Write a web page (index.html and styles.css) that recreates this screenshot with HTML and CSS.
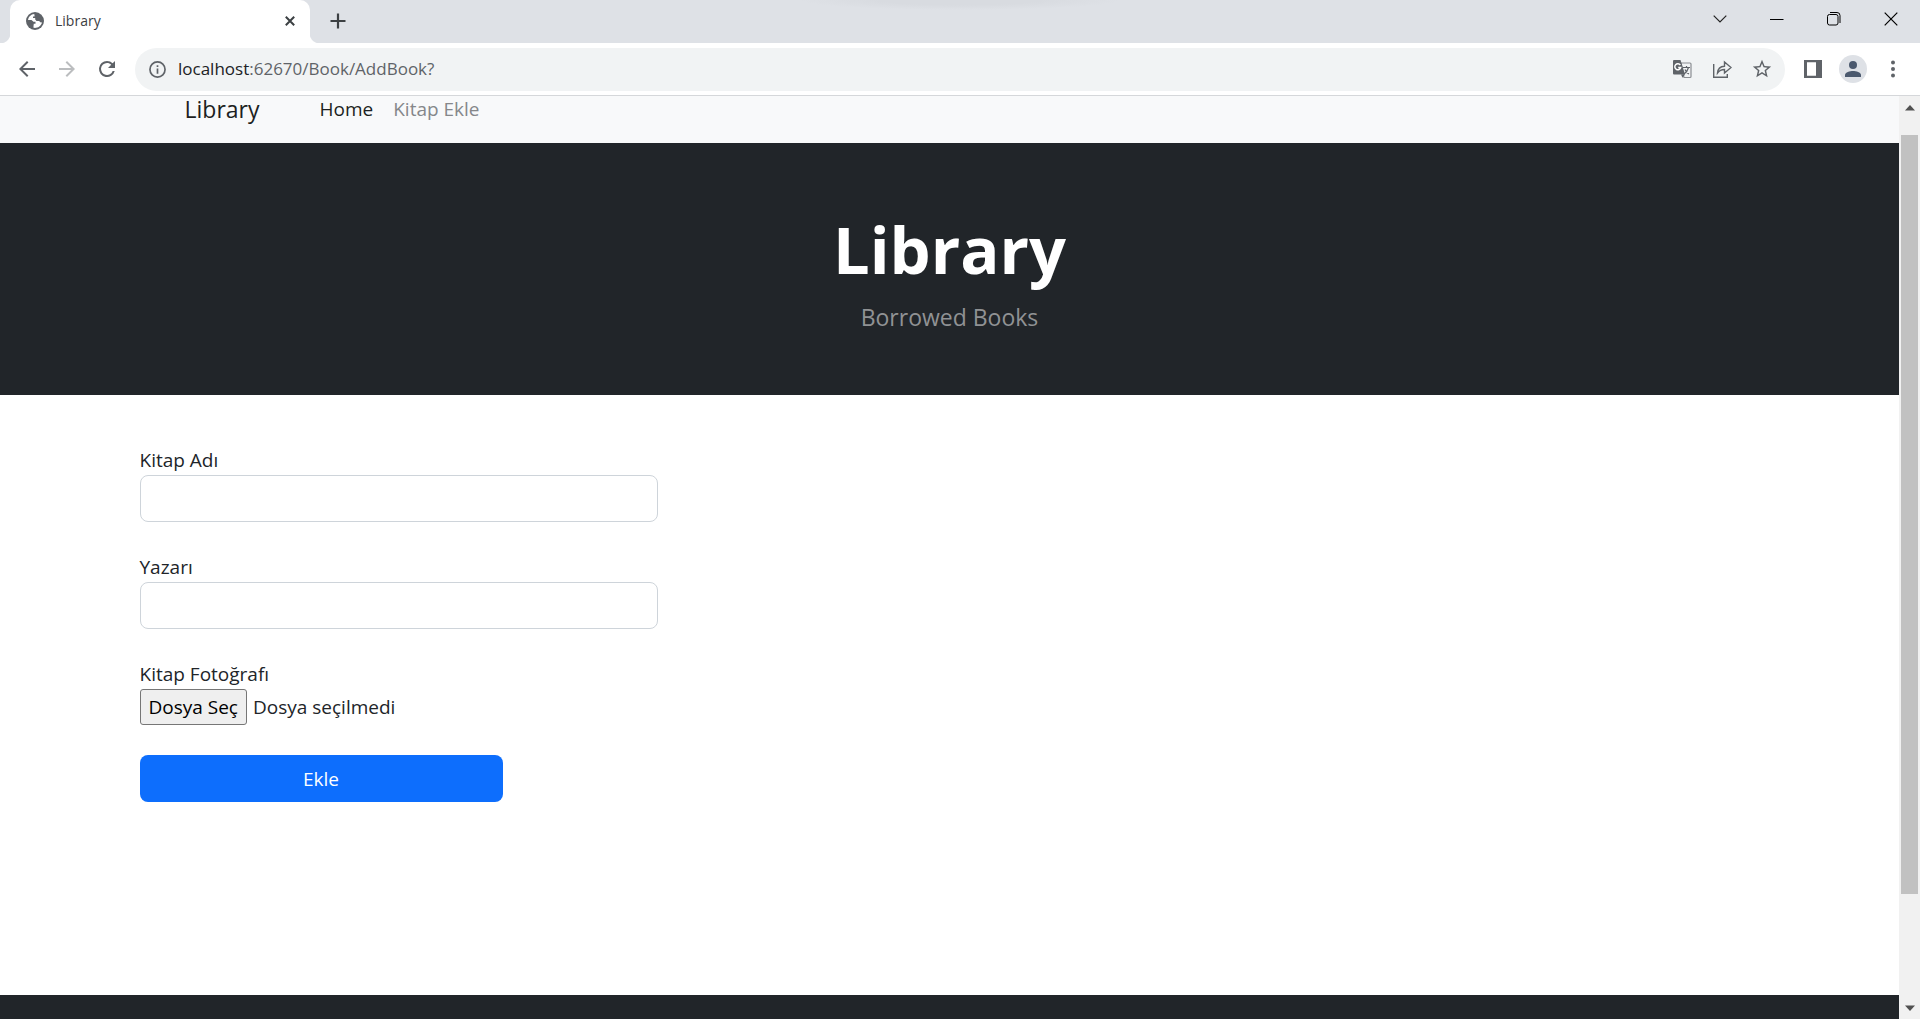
FILE: index.html
```html
<!DOCTYPE html>
<html lang="tr">
<head>
<meta charset="utf-8">
<title>Library</title>
<meta name="viewport" content="width=device-width, initial-scale=1">
<link rel="stylesheet" href="styles.css">
</head>
<body>
<header class="browser">
  <div class="tabstrip">
    <div class="tab">
      <svg class="icon-globe" viewBox="0 0 18 18" aria-hidden="true"><circle cx="9" cy="9" r="9" fill="#5f6368"/><path fill="#fff" d="M8.200 1.900C5 2.200 2.400 4.700 2 8h3.500l2 1.800H9.500v2H7.800L7.500 14v1.800C11 16.500 15 14.500 16 10.500l-1.800-.2-1-1.300H10.500L9.200 7.500V6H7V4.500h1.500V3z"/></svg>
      <span class="tab-title">Library</span>
      <button class="tab-close" type="button" aria-label="Sekmeyi kapat"><svg width="10" height="10" viewBox="0 0 10 10"><path d="M.8.8l8.400 8.400M9.200.8L.8 9.200" stroke="#3c4043" stroke-width="2"/></svg></button>
    </div>
    <button class="new-tab" type="button" aria-label="Yeni sekme"><svg width="16" height="16" viewBox="0 0 16 16"><path d="M8 .5v15M.5 8h15" stroke="#3c4043" stroke-width="2.200"/></svg></button>
    <div class="window-controls">
      <button type="button" aria-label="Sekme ara"><svg width="14" height="8" viewBox="0 0 14 8"><path d="M.7.700L7 7l6.300-6.300" fill="none" stroke="#222" stroke-width="1.200"/></svg></button>
      <button type="button" aria-label="Simge durumuna küçült"><svg width="14" height="14" viewBox="0 0 14 14"><path d="M0 7.500h13.500" stroke="#000"/></svg></button>
      <button type="button" aria-label="Önceki boyut"><svg width="14" height="14" viewBox="0 0 14 14" fill="none" stroke="#000"><rect x=".5" y="2.500" width="10.500" height="10.500" rx="2"/><path d="M3 .500h7q3 0 3 3v7.500"/></svg></button>
      <button type="button" aria-label="Kapat"><svg width="14" height="14" viewBox="0 0 14 14"><path d="M.7.700l12.600 12.600M13.300.700L.7 13.300" stroke="#000" stroke-width="1.200"/></svg></button>
    </div>
  </div>
  <div class="toolbar">
    <button class="nav-button" type="button" aria-label="Geri"><svg viewBox="0 0 24 24"><path fill="#5f6368" d="M20 11H7.830l5.590-5.590L12 4l-8 8 8 8 1.410-1.410L7.830 13H20z"/></svg></button>
    <button class="nav-button" type="button" aria-label="İleri" disabled><svg viewBox="0 0 24 24"><path fill="#bbbdbf" d="M12 4l-1.410 1.410L16.170 11H4v2h12.170l-5.580 5.590L12 20l8-8z"/></svg></button>
    <button class="nav-button" type="button" aria-label="Yenile"><svg viewBox="0 0 24 24"><path fill="#5f6368" d="M17.650 6.350A7.960 7.960 0 0 0 12 4a8 8 0 1 0 7.730 10h-2.080A6 6 0 1 1 12 6c1.660 0 3.140.690 4.220 1.780L13 11h7V4z"/></svg></button>
    <form class="omnibox">
      <svg class="icon-info" viewBox="0 0 16 16" fill="none" stroke="#5f6368" stroke-width="1.600" aria-hidden="true"><circle cx="8" cy="8" r="7.100"/><path d="M8 7v5M8 4v1.600"/></svg>
      <a class="address" href="#">localhost<span class="path">:62670/Book/AddBook?</span></a>
      <button type="button" aria-label="Çevir"><svg width="20" height="20" viewBox="0 0 20 20"><path fill="none" stroke="#8b8e92" stroke-width="1.200" d="M9 4h9q1 0 1 1v12.500q0 1-1 1h-6z"/><path d="M11 8.500h7M14.500 7v1.500M16.500 8.500q-1 4-4.500 6.500M13 10.500q1 3 4 4.500" fill="none" stroke="#5f6368" stroke-width="1.200"/><path fill="#5f6368" d="M2 1h6.500l4.500 14.500H2q-1 0-1-1V2q0-1 1-1z"/><path fill="#5f6368" d="M9 15.500h4l-2.500 3.200z"/><path d="M8.300 6A3 3 0 1 0 8.700 8.500H6.200" fill="none" stroke="#fff" stroke-width="1.500"/></svg></button>
      <button type="button" aria-label="Paylaş"><svg width="20" height="20" viewBox="0 0 20 20" fill="none" stroke="#5f6368" stroke-width="1.400"><path d="M1.700 5v13.300h13.600V15M5.500 14q.5-6.500 7-6.800V3L19 8.500l-6.500 5.500v-3.500Q8 10.500 5.500 14z"/></svg></button>
      <button type="button" aria-label="Yer işareti ekle"><svg width="22" height="22" viewBox="0 0 24 24"><path fill="#5f6368" d="M22 9.240l-7.190-.620L12 2 9.190 8.630 2 9.240l5.460 4.730L5.820 21 12 17.270 18.180 21l-1.630-7.030L22 9.240zM12 15.400l-3.760 2.270 1-4.280-3.320-2.880 4.380-.380L12 6.100l1.710 4.040 4.380.380-3.320 2.880 1 4.280L12 15.400z"/></svg></button>
    </form>
    <button class="panel-button" type="button" aria-label="Yan panel"><svg width="18" height="18" viewBox="0 0 18 18"><path fill="#5f6368" fill-rule="evenodd" d="M0 0h18v18H0zM3 2.200h9v13.600H3z"/></svg></button>
    <button class="profile" type="button" aria-label="Profil"><svg width="16" height="16" viewBox="0 0 16 16" fill="#4b596e"><circle cx="8" cy="4" r="4"/><path d="M0 16v-2c0-2.600 5-4 8-4s8 1.400 8 4v2z"/></svg></button>
    <button class="menu" type="button" aria-label="Menü"><svg width="4" height="18" viewBox="0 0 4 18" fill="#5f6368"><circle cx="2" cy="2.500" r="2"/><circle cx="2" cy="9" r="2"/><circle cx="2" cy="15.500" r="2"/></svg></button>
  </div>
</header>
<div class="viewport">
  <div class="page">
    <nav class="navbar">
      <div class="container navbar-inner">
        <a class="brand" href="#">Library</a>
        <a class="nav-link active" href="#">Home</a>
        <a class="nav-link" href="#">Kitap Ekle</a>
      </div>
    </nav>
    <header class="hero">
      <h1>Library</h1>
      <p>Borrowed Books</p>
    </header>
    <main class="container content">
      <form class="book-form">
        <div class="field">
          <label for="name">Kitap Adı</label>
          <input class="text-input" id="name" type="text">
        </div>
        <div class="field">
          <label for="author">Yazarı</label>
          <input class="text-input" id="author" type="text">
        </div>
        <div class="field">
          <label for="photo">Kitap Fotoğrafı</label>
          <div class="file-row">
            <button class="file-button" type="button" tabindex="-1">Dosya Seç</button>
            <span>Dosya seçilmedi</span>
            <input class="file-input" id="photo" type="file">
          </div>
        </div>
        <button class="submit" type="submit">Ekle</button>
      </form>
    </main>
    <footer class="footer"></footer>
  </div>
  <div class="scrollbar" aria-hidden="true">
    <svg viewBox="0 0 10 6"><path fill="#505050" d="M5 0l5 5.500H0z"/></svg>
    <div class="track"><div class="thumb"></div></div>
    <svg viewBox="0 0 10 6"><path fill="#505050" d="M0 .500h10L5 6z"/></svg>
  </div>
</div>
</body>
</html>
```
FILE: styles.css
```css
* {
  box-sizing: border-box;
}

body {
  margin: 0;
  height: 100vh;
  display: flex;
  flex-direction: column;
  overflow: hidden;
  background: #fff;
  color: #212529;
  font-family: "Open Sans", "Noto Sans", sans-serif;
  font-size: 19px;
  line-height: 30px;
}

button {
  border: 0;
  padding: 0;
  background: none;
  font: inherit;
  display: grid;
  place-items: center;
}

a {
  color: inherit;
  text-decoration: none;
}

svg {
  display: block;
}

/* Browser window */
.browser {
  border-bottom: 1px solid #d5d7da;
}

.tabstrip {
  height: 43px;
  padding-right: 1px;
  display: flex;
  background:
    radial-gradient(circle at 0 0, #dee1e6 10px, #fff 11px) 0 100% / 10px 10px no-repeat,
    radial-gradient(ellipse 160px 10px at 50% 0, #d8dbe0 50%, transparent),
    #dee1e6;
}

.tab {
  width: 300px;
  margin-left: 10px;
  padding: 0 15px 2px 16px;
  display: flex;
  align-items: center;
  gap: 11px;
  position: relative;
  border-radius: 10px 10px 0 0;
  background: #fff;
  color: #3c4043;
  font-size: 14px;
}

.tab::after {
  content: "";
  position: absolute;
  left: 100%;
  bottom: 0;
  width: 10px;
  height: 10px;
  background: radial-gradient(circle at 100% 0, #dee1e6 10px, #fff 11px);
}

.icon-globe {
  width: 18px;
  height: 18px;
}

.tab-title {
  flex: 1;
}

.new-tab {
  width: 55px;
  height: 42px;
}

.window-controls {
  display: flex;
  margin-left: auto;
}

.window-controls button {
  width: 57px;
  height: 37px;
}

.toolbar {
  height: 52px;
  padding: 0 17px 0 12px;
  display: flex;
  align-items: center;
}

.nav-button {
  width: 30px;
  margin-right: 10px;
}

.nav-button svg {
  width: 24px;
  height: 24px;
}

.omnibox {
  flex: 1;
  height: 43px;
  margin: 0 19px 0 3px;
  padding: 0 12px 0 14px;
  display: flex;
  align-items: center;
  gap: 18px;
  border-radius: 22px;
  background: #f1f3f4;
  font-size: 17px;
}

.omnibox button {
  width: 22px;
}

.icon-info {
  width: 17px;
  height: 17px;
}

.address {
  flex: 1;
  margin-left: -6px;
  color: #202124;
}

.path {
  color: #5f6368;
}

.profile {
  width: 28px;
  height: 28px;
  margin: 0 24px 0 17px;
  border-radius: 50%;
  background: #dee1e6;
}

.menu {
  margin-right: 8px;
}

.viewport {
  flex: 1;
  display: flex;
  min-height: 0;
}

/* Page */
.page {
  flex: 1;
  display: flex;
  flex-direction: column;
}

.container {
  width: 100%;
  max-width: 1650px;
  margin: 0 auto;
  padding: 0 15px;
}

.navbar {
  padding-bottom: 22px;
  background: #f8f9fa;
}

.navbar-inner {
  height: 25px;
  padding: 0 60px;
  display: flex;
  align-items: center;
  gap: 20px;
}

.brand {
  margin-right: 40px;
  color: #1c1f22;
  font-size: 23px;
}

.nav-link {
  color: #85878a;
}

.nav-link.active {
  color: #1c1f22;
}

.hero {
  padding: 64px 20px 62px;
  background: #212529;
  text-align: center;
}

.hero h1 {
  margin: 0 0 10px;
  color: #fff;
  font-size: 65px;
  font-weight: 700;
  line-height: 84px;
}

.hero p {
  margin: 0;
  color: #909294;
  font-size: 23px;
  line-height: 32px;
}

.content {
  flex: 1;
  padding-top: 50px;
}

.book-form {
  display: flex;
  flex-direction: column;
  gap: 30px;
}

.field label {
  display: block;
}

.text-input {
  display: block;
  width: 32%;
  height: 47px;
  padding: 8px 15px;
  border: 1px solid #ced4da;
  border-radius: 8px;
  background: #fff;
  font: inherit;
}

.file-row {
  position: relative;
  width: 32%;
  display: flex;
  align-items: center;
  gap: 6px;
}

.file-button {
  height: 36px;
  padding: 0 8px;
  border: 1px solid #767676;
  border-radius: 3px;
  background: #efefef;
  color: #000;
}

/* Transparent picker over the styled button and status text */
.file-input {
  position: absolute;
  inset: 0;
  width: 100%;
  opacity: 0;
}

.submit {
  width: 363px;
  height: 47px;
  border-radius: 8px;
  background: #0d6efd;
  color: #fff;
}

.footer {
  height: 24px;
  background: #212529;
}

.scrollbar {
  width: 21px;
  padding: 9px 2px 8px;
  display: flex;
  flex-direction: column;
  align-items: center;
  background: #f1f1f1;
}

.scrollbar svg {
  width: 10px;
  height: 6px;
}

.track {
  flex: 1;
  align-self: stretch;
  padding: 24px 0 111px;
}

.thumb {
  height: 100%;
  background: #c1c1c1;
}
```
